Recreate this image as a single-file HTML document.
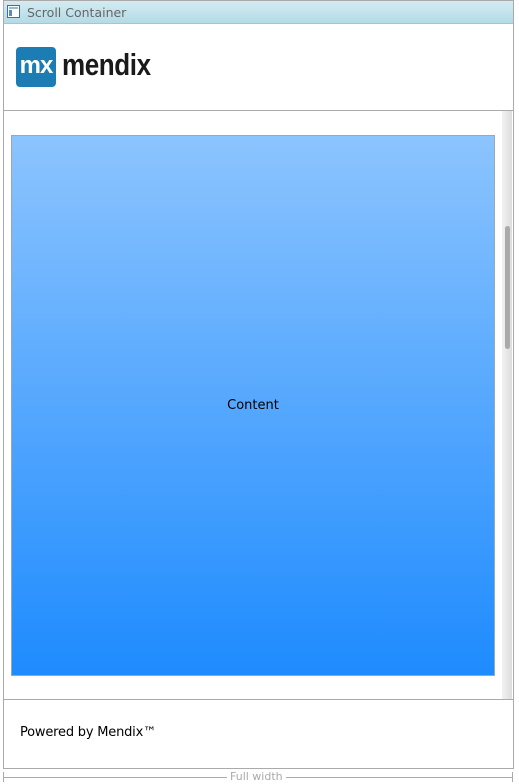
<!DOCTYPE html>
<html><head><style>
body{margin:0;width:519px;height:784px;background:#fff;position:relative;font-family:"DejaVu Sans","Liberation Sans",sans-serif;overflow:hidden}
.abs{position:absolute}
</style></head><body>
<div class="abs" style="left:3px;top:0;width:509px;height:767px;border:1px solid #aaa;"></div>
<div class="abs" style="left:4px;top:1px;width:509px;height:22px;background:linear-gradient(#d4ebf1,#b3dbe6);border-bottom:1px solid #9cc;"></div>
<div class="abs" style="left:7px;top:5px;width:13px;height:13px;border:1px solid #3f6f9f;background:#fff;box-sizing:border-box"><div style="position:absolute;left:1px;top:1px;width:9px;height:2px;background:#9bc"></div><div style="position:absolute;left:1px;top:4px;width:3px;height:6px;background:#5a8cc0"></div></div>
<div class="abs" style="left:27px;top:5px;font-size:12.5px;color:#666">Scroll Container</div>
<div class="abs" style="left:16px;top:47px;width:40px;height:40px;background:#1b7db4;border-radius:4px;color:#fff;font:bold 24px/38px 'Liberation Sans',sans-serif;text-align:center;letter-spacing:-1px">mx</div>
<div class="abs" style="left:62px;top:45px;font:bold 31px/40px 'Liberation Sans',sans-serif;color:#1a1a1a;letter-spacing:-0.5px;transform:scaleX(0.84);transform-origin:left">mendix</div>
<div class="abs" style="left:4px;top:110px;width:509px;height:1px;background:#aaa"></div>
<div class="abs" style="left:502px;top:111px;width:10px;height:588px;background:linear-gradient(90deg,#f2f2f2,#ddd)"></div>
<div class="abs" style="left:505px;top:226px;width:5px;height:123px;background:#aaa;border-radius:3px"></div>
<div class="abs" style="left:11px;top:135px;width:482px;height:539px;border:1px solid #9aa;background:linear-gradient(#8cc4fe,#1e8bfe)"></div>
<div class="abs" style="left:11px;top:398px;width:484px;text-align:center;font-size:13px;color:#000">Content</div>
<div class="abs" style="left:4px;top:699px;width:509px;height:1px;background:#aaa"></div>
<div class="abs" style="left:20px;top:725px;font-size:13px;color:#000;letter-spacing:-0.2px">Powered by Mendix™</div>
<div class="abs" style="left:4px;top:777px;width:509px;height:1px;background:#aaa"></div>
<div class="abs" style="left:3px;top:772px;width:1px;height:10px;background:#aaa"></div>
<div class="abs" style="left:512px;top:772px;width:1px;height:10px;background:#aaa"></div>
<div class="abs" style="left:227px;top:770px;padding:0 3px;background:#fff;font-size:11px;color:#aaa">Full width</div>
</body></html>
